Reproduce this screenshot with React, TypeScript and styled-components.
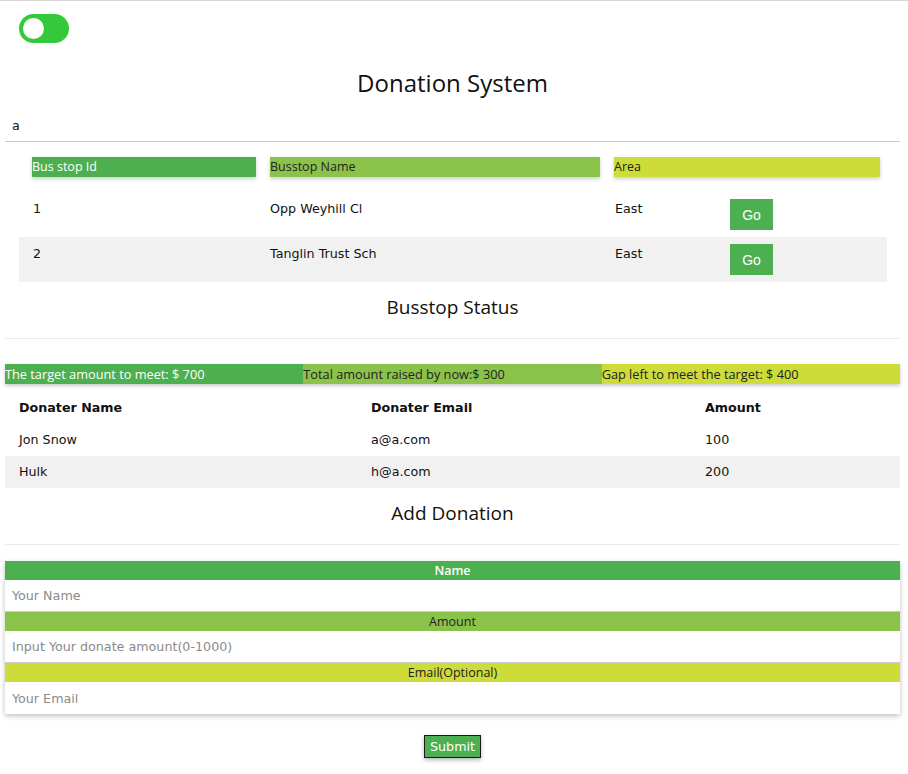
import styled, { createGlobalStyle } from "styled-components";

const GlobalStyle = createGlobalStyle`
  body {
    margin: 0;
    background: #fff;
    color: #111;
    font-family: "DejaVu Sans", Verdana, sans-serif;
    font-size: 12.7px;
  }
`;

const Page = styled.div`
  border-top: 1px solid #d6d6d6;
  padding: 0 8px 14px 5px;
`;

const Toggle = styled.div`
  width: 50px;
  height: 29px;
  margin: 13px 0 0 14px;
  border-radius: 15px;
  background: #33c93a;
  display: flex;
  align-items: center;
  padding-left: 4px;
  box-sizing: border-box;
  > span {
    width: 21px;
    height: 21px;
    border-radius: 50%;
    background: #fff;
  }
`;

const Title = styled.h1`
  margin: 24px 0 0;
  text-align: center;
  font-family: "Open Sans", sans-serif;
  font-weight: 400;
  font-size: 24px;
  line-height: 31px;
  color: #111;
`;

const Note = styled.div`
  margin: 20px 0 0 7px;
  line-height: 16px;
`;

const Rule = styled.hr<{ $light?: boolean }>`
  margin: ${(p) => (p.$light ? "18px 0 0" : "7px 0 0")};
  border: 0;
  border-top: 1px solid ${(p) => (p.$light ? "#eaeaea" : "#c8c8c8")};
`;

const BusTable = styled.div`
  margin: 0 13px 0 14px;
  display: grid;
  grid-template-columns: 244px 344px 1fr;
`;

const HeadCell = styled.div<{ $first?: boolean }>`
  padding: 15px 7px 15px ${(p) => (p.$first ? "13px" : "7px")};
`;

const HeadBox = styled.div<{ $bg: string; $light?: boolean }>`
  height: 20px;
  line-height: 20px;
  background: ${(p) => p.$bg};
  color: ${(p) => (p.$light ? "#fff" : "#222")};
  font-family: "Open Sans", sans-serif;
  font-size: 12.5px;
  box-shadow: 0 2px 4px rgba(0, 0, 0, 0.2);
`;

const BusCell = styled.div<{ $shade?: boolean; $first?: boolean }>`
  background: ${(p) => (p.$shade ? "#f1f1f1" : "transparent")};
  padding: 9px 7px 0 ${(p) => (p.$first ? "14px" : "7px")};
  height: 45px;
  box-sizing: border-box;
  display: flex;
  align-items: flex-start;
  line-height: 16px;
`;

const AreaText = styled.span`
  width: 115px;
  padding-left: 1px;
`;

const GoButton = styled.button`
  width: 43px;
  height: 31px;
  margin-top: -2px;
  border: 0;
  background: #4caf50;
  color: #fff;
  font-family: "Liberation Sans", Arial, sans-serif;
  font-size: 14px;
`;

const SubTitle = styled.h2<{ $gap?: number }>`
  margin: ${(p) => p.$gap ?? 12}px 0 0;
  text-align: center;
  font-family: "Open Sans", sans-serif;
  font-weight: 400;
  font-size: 19px;
  line-height: 26px;
  color: #111;
`;

const StatusBar = styled.div`
  margin-top: 25px;
  display: grid;
  grid-template-columns: repeat(3, 1fr);
  box-shadow: 0 2px 4px rgba(0, 0, 0, 0.2);
`;

const StatusItem = styled.div<{ $bg: string; $light?: boolean }>`
  height: 20px;
  line-height: 20px;
  background: ${(p) => p.$bg};
  color: ${(p) => (p.$light ? "#fff" : "#222")};
  font-family: "Open Sans", sans-serif;
  font-size: 12.75px;
  white-space: nowrap;
`;

const DonorTable = styled.div`
  margin-top: 8px;
  margin-bottom: -1px;
  display: grid;
  grid-template-columns: 352px 334px 1fr;
`;

const DonorCell = styled.div<{ $shade?: boolean; $head?: boolean }>`
  height: 32px;
  line-height: 32px;
  padding-left: 14px;
  background: ${(p) => (p.$shade ? "#f1f1f1" : "transparent")};
  font-weight: ${(p) => (p.$head ? 700 : 400)};
`;

const FormCard = styled.div`
  margin-top: 16px;
  box-shadow: 0 2px 5px rgba(0, 0, 0, 0.25);
`;

const FieldLabel = styled.div<{ $bg: string; $light?: boolean }>`
  height: 19px;
  line-height: 19px;
  text-align: center;
  background: ${(p) => p.$bg};
  color: ${(p) => (p.$light ? "#fff" : "#222")};
  font-family: "Open Sans", sans-serif;
  font-size: 12.5px;
  font-weight: ${(p) => (p.$light ? 600 : 400)};
`;

const FieldInput = styled.input`
  display: block;
  width: 100%;
  height: 32px;
  box-sizing: border-box;
  border: 0;
  border-bottom: 1px solid #ccc;
  padding: 0 7px;
  font-family: "DejaVu Sans", Verdana, sans-serif;
  font-size: 12.7px;
  outline: none;
  &::placeholder {
    color: #8a8a8a;
  }
  &:last-child {
    border-bottom: 0;
  }
`;

const SubmitRow = styled.div`
  display: flex;
  justify-content: center;
  margin-top: 21px;
`;

const SubmitButton = styled.button`
  height: 23px;
  padding: 0 5px;
  background: #4caf50;
  color: #fff;
  border: 1px solid #1a1a1a;
  font-family: "DejaVu Sans", Verdana, sans-serif;
  font-size: 12.7px;
  box-shadow: 0 2px 4px rgba(0, 0, 0, 0.3);
`;

const busStops = [
  { id: 1, name: "Opp Weyhill Cl", area: "East" },
  { id: 2, name: "Tanglin Trust Sch", area: "East" },
];

const donors = [
  { name: "Jon Snow", email: "a@a.com", amount: 100 },
  { name: "Hulk", email: "h@a.com", amount: 200 },
];

const App = () => {
  return (
    <Page>
      <GlobalStyle />
      <Toggle>
        <span />
      </Toggle>
      <Title>Donation System</Title>
      <Note>a</Note>
      <Rule />

      <BusTable>
        <HeadCell $first>
          <HeadBox $bg="#4caf50" $light>Bus stop Id</HeadBox>
        </HeadCell>
        <HeadCell>
          <HeadBox $bg="#8bc34a">Busstop Name</HeadBox>
        </HeadCell>
        <HeadCell>
          <HeadBox $bg="#cddc39">Area</HeadBox>
        </HeadCell>
        {busStops.map((s, i) => [
          <BusCell key={`id${s.id}`} $first $shade={i % 2 === 1}>{s.id}</BusCell>,
          <BusCell key={`n${s.id}`} $shade={i % 2 === 1}>{s.name}</BusCell>,
          <BusCell key={`a${s.id}`} $shade={i % 2 === 1}>
            <AreaText>{s.area}</AreaText>
            <GoButton>Go</GoButton>
          </BusCell>,
        ])}
      </BusTable>

      <SubTitle>Busstop Status</SubTitle>
      <Rule $light />
      <StatusBar>
        <StatusItem $bg="#4caf50" $light>The target amount to meet: $ 700</StatusItem>
        <StatusItem $bg="#8bc34a">Total amount raised by now:$ 300</StatusItem>
        <StatusItem $bg="#cddc39">Gap left to meet the target: $ 400</StatusItem>
      </StatusBar>

      <DonorTable>
        <DonorCell $head>Donater Name</DonorCell>
        <DonorCell $head>Donater Email</DonorCell>
        <DonorCell $head>Amount</DonorCell>
        {donors.map((d, i) => [
          <DonorCell key={`dn${i}`} $shade={i % 2 === 1}>{d.name}</DonorCell>,
          <DonorCell key={`de${i}`} $shade={i % 2 === 1}>{d.email}</DonorCell>,
          <DonorCell key={`da${i}`} $shade={i % 2 === 1}>{d.amount}</DonorCell>,
        ])}
      </DonorTable>

      <SubTitle $gap={13}>Add Donation</SubTitle>
      <Rule $light />
      <FormCard>
        <FieldLabel $bg="#4caf50" $light>Name</FieldLabel>
        <FieldInput placeholder="Your Name" />
        <FieldLabel $bg="#8bc34a">Amount</FieldLabel>
        <FieldInput placeholder="Input Your donate amount(0-1000)" />
        <FieldLabel $bg="#cddc39">Email(Optional)</FieldLabel>
        <FieldInput placeholder="Your Email" />
      </FormCard>
      <SubmitRow>
        <SubmitButton>Submit</SubmitButton>
      </SubmitRow>
    </Page>
  );
};

export default App;
